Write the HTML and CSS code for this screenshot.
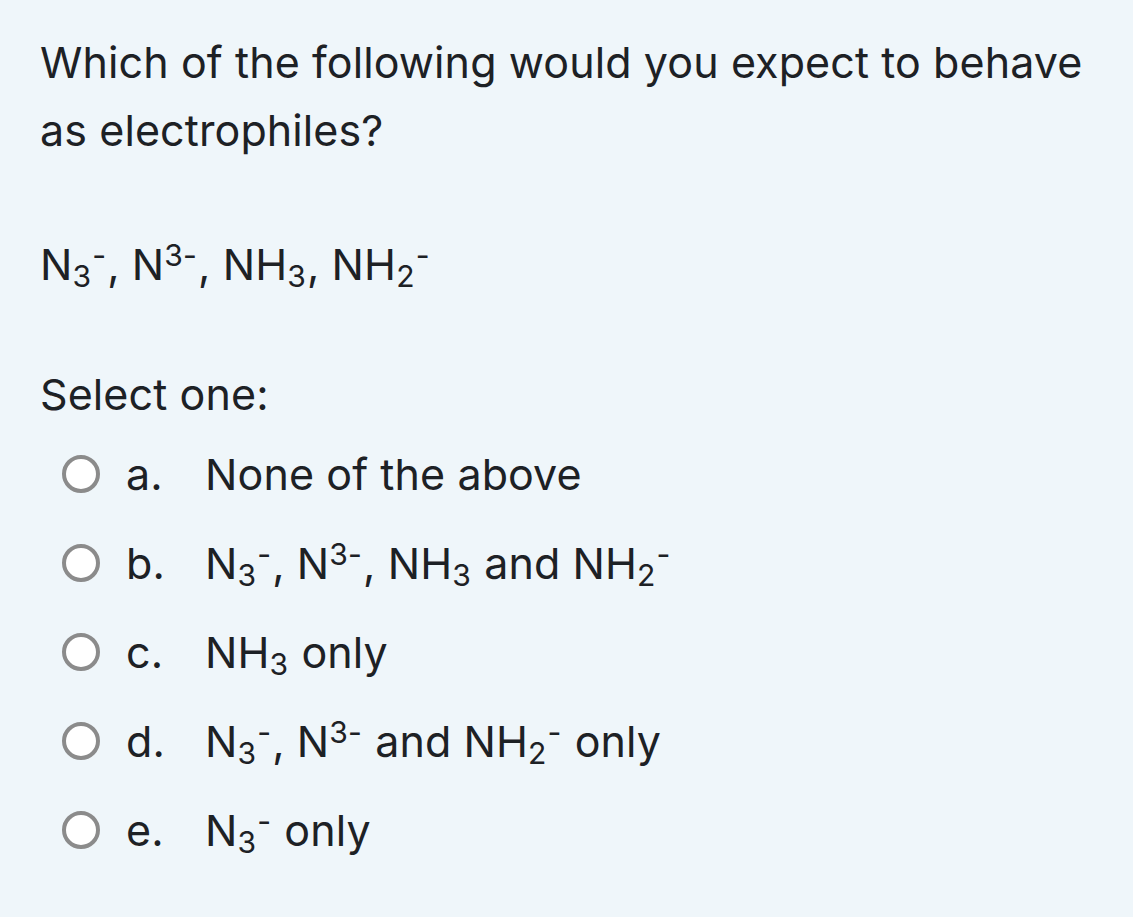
FILE: index.html
```html
<!DOCTYPE html>
<html>
<head>
<meta charset="utf-8">
<link rel="stylesheet" href="styles.css">
</head>
<body>
<div class="que">
  <div class="qtext">
    <p class="q">Which of the following would you expect to behave as electrophiles?</p>
    <p class="formula">N<sub>3</sub><sup>-</sup>, N<sup>3-</sup>, NH<sub>3</sub>, NH<sub>2</sub><sup>-</sup></p>
  </div>
  <div class="prompt">Select one:</div>
  <div class="answers">
    <div class="opt"><span class="radio"></span><span class="letter">a.</span><span class="label">None of the above</span></div>
    <div class="opt"><span class="radio"></span><span class="letter">b.</span><span class="label">N<sub>3</sub><sup>-</sup>, N<sup>3-</sup>, NH<sub>3</sub> and NH<sub>2</sub><sup>-</sup></span></div>
    <div class="opt"><span class="radio"></span><span class="letter">c.</span><span class="label">NH<sub>3</sub> only</span></div>
    <div class="opt"><span class="radio"></span><span class="letter">d.</span><span class="label">N<sub>3</sub><sup>-</sup>, N<sup>3-</sup> and NH<sub>2</sub><sup>-</sup> only</span></div>
    <div class="opt"><span class="radio"></span><span class="letter">e.</span><span class="label">N<sub>3</sub><sup>-</sup> only</span></div>
  </div>
</div>
</body>
</html>
```
FILE: styles.css
```css
html, body {
  margin: 0;
  padding: 0;
  background: #eff6fa;
}
body {
  font-family: Inter, "Liberation Sans", sans-serif;
  color: #1d2125;
  font-size: 43px;
  line-height: 68px;
  letter-spacing: 0.1px;
}
.que {
  padding: 28px 40px 0 40px;
}
.qtext p {
  margin: 0;
}
.formula {
  margin-top: 66px !important;
}
sub, sup {
  font-size: 0.7em;
  line-height: 0;
  position: relative;
  vertical-align: baseline;
  margin-right: 1px;
}
sub {
  top: 0.22em;
}
sup {
  top: -0.45em;
}
.prompt {
  margin-top: 62px;
}
.answers {
  margin-top: 12px;
  display: flex;
  flex-direction: column;
  gap: 21px;
}
.opt {
  display: flex;
  align-items: center;
  height: 68px;
}
.radio {
  box-sizing: border-box;
  width: 38px;
  height: 38px;
  border: 4px solid #8b8b8b;
  border-radius: 50%;
  background: #fff;
  margin-left: 22px;
  margin-right: 26px;
  flex: none;
}
.letter {
  width: 79px;
  flex: none;
}
```
